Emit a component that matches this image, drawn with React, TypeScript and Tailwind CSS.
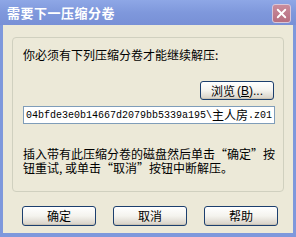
import { X } from 'lucide-react'

const cjk = { fontFamily: '"Noto Sans CJK SC", "Liberation Sans", sans-serif' }

function XpButton({ children, className = '' }: { children: React.ReactNode; className?: string }) {
  return (
    <div
      className={`flex items-center justify-center rounded-[3px] border border-[#1c3f6e] bg-gradient-to-b from-[#ffffff] via-[#f4f3ee] to-[#d6d0c5] text-[12px] leading-none text-black shadow-[inset_0_-1px_0_#c9c3b5] ${className}`}
    >
      {children}
    </div>
  )
}

// full-width curly quotes, as the dialog's system font draws them
const LQ = () => <span className="inline-block w-[12px] text-right">“</span>
const RQ = () => <span className="inline-block w-[12px] text-left">”</span>

export default function App() {
  return (
    <div lang="zh-CN" className="w-[296px] h-[237px] flex flex-col bg-[#7e98dc] overflow-hidden" style={cjk}>
      {/* Title bar */}
      <div className="h-[25px] flex items-center justify-between pl-[7px] pr-[5px] bg-gradient-to-b from-[#8ea7e6] via-[#7f98dc] to-[#7890d6]">
        <span className="text-[13px] font-bold tracking-[0.5px] text-white">需要下一压缩分卷</span>
        <div className="w-[19px] h-[19px] mt-[1px] flex items-center justify-center rounded-[3px] border border-[#d9c6d8] bg-gradient-to-b from-[#c98c9c] to-[#b66e80]">
          <X className="w-[15px] h-[15px] text-white" strokeWidth={3} />
        </div>
      </div>

      {/* Body */}
      <div className="flex-1 mx-[3px] mb-[4px] bg-[#ece9d8] flex flex-col">
        {/* Group box */}
        <div className="ml-[9px] mt-[12px] w-[272px] h-[155px] rounded-[4px] border border-[#d0d0bf] flex flex-col pl-[10px] pr-[10px]">
          <div className="mt-[11px] text-[12px] leading-[12px] text-black">你必须有下列压缩分卷才能继续解压:</div>
          <div className="mt-[20px] flex justify-end">
            <XpButton className="w-[74px] h-[19px] mr-[-1px]">
              <span>浏览</span>
              <span className="ml-[2px]" style={{ fontFamily: '"Liberation Sans", sans-serif' }}>
                (<span className="underline">B</span>)...
              </span>
            </XpButton>
          </div>
          <div className="mt-[6px] w-[252px] h-[18px] border border-[#7f9db9] bg-white flex items-center pl-[2px] whitespace-nowrap text-black">
            <span className="text-[10px]" style={{ fontFamily: '"Liberation Mono", monospace' }}>04bfde3e0b14667d2079bb5339a195\</span>
            <span className="text-[12px] leading-none">主人房</span>
            <span className="text-[10px]" style={{ fontFamily: '"Liberation Mono", monospace' }}>.z01</span>
          </div>
          <div className="mt-[23px] flex flex-col text-[12px] leading-[14px] text-black whitespace-nowrap">
            <span>
              插入带有此压缩分卷的磁盘然后单击<LQ />确定<RQ />按
            </span>
            <span>
              钮重试, 或单击<LQ />取消<RQ />按钮中断解压。
            </span>
          </div>
        </div>

        {/* Buttons */}
        <div className="mt-[14px] pl-[19px] flex gap-[17px]">
          <XpButton className="w-[74px] h-[20px]">确定</XpButton>
          <XpButton className="w-[74px] h-[20px]">取消</XpButton>
          <XpButton className="w-[74px] h-[20px]">帮助</XpButton>
        </div>
      </div>
    </div>
  )
}
